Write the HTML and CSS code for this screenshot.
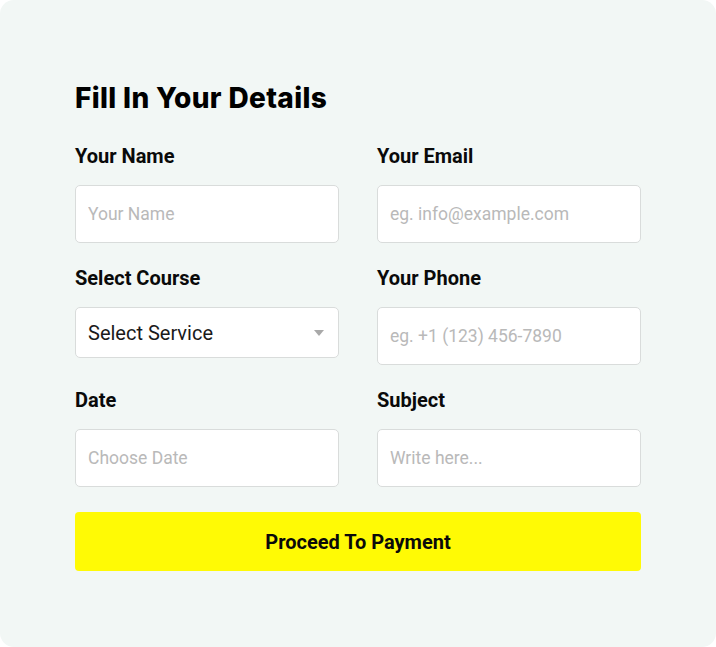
FILE: index.html
```html
<!DOCTYPE html>
<html>
<head>
<meta charset="utf-8">
<link rel="stylesheet" href="styles.css">
</head>
<body>
<div class="card">
  <h2 class="title">Fill In Your Details</h2>
  <form class="form">
    <div class="field">
      <label class="label">Your Name</label>
      <input class="input" type="text" placeholder="Your Name">
    </div>
    <div class="field">
      <label class="label">Your Email</label>
      <input class="input" type="text" placeholder="eg. info@example.com">
    </div>
    <div class="field">
      <label class="label">Select Course</label>
      <div class="select">
        <span>Select Service</span>
        <svg class="caret" width="10" height="6" viewBox="0 0 10 6"><path d="M0 0H10L5 6Z" fill="#a9a9a9"/></svg>
      </div>
    </div>
    <div class="field">
      <label class="label">Your Phone</label>
      <input class="input" type="text" placeholder="eg. +1 (123) 456-7890">
    </div>
    <div class="field">
      <label class="label">Date</label>
      <input class="input" type="text" placeholder="Choose Date">
    </div>
    <div class="field">
      <label class="label">Subject</label>
      <input class="input" type="text" placeholder="Write here...">
    </div>
    <button class="btn" type="button">Proceed To Payment</button>
  </form>
</div>
</body>
</html>
```

FILE: styles.css
```css
* { box-sizing: border-box; }
html, body { margin: 0; padding: 0; background: #ffffff; }
.card {
  width: 716px;
  height: 647px;
  background: #f2f7f5;
  border-radius: 14px;
  padding: 78px 75px 0 75px;
  font-family: Roboto, "Liberation Sans", sans-serif;
}
.title {
  margin: 0 0 26px 0;
  font-family: "Inter", "Open Sans", sans-serif;
  font-weight: 800;
  font-size: 28px;
  line-height: 40px;
  letter-spacing: 0.35px;
  color: #000;
}
.form {
  display: grid;
  grid-template-columns: 264px 264px;
  column-gap: 38px;
  row-gap: 23px;
}
.field { display: flex; flex-direction: column; }
.label {
  font-size: 20px;
  font-weight: 700;
  line-height: 24px;
  color: #0a0a0a;
  margin-bottom: 17px;
}
.input, .select {
  height: 58px;
  width: 100%;
  border: 1px solid #d9dcdb;
  border-radius: 5px;
  background: #fff;
  padding: 0 12px;
  font-family: Roboto, "Liberation Sans", sans-serif;
  font-size: 17.5px;
  color: #222;
  outline: none;
}
.input::placeholder { color: #b9b9b9; }
.select {
  height: 51px;
  display: flex;
  align-items: center;
  justify-content: space-between;
  font-size: 20px;
  color: #1a1a1a;
  padding: 0 14px 0 12px;
}
.caret { margin-top: 1px; }
.btn {
  grid-column: 1 / 3;
  height: 59px;
  margin-top: 2px;
  border: none;
  border-radius: 4px;
  background: #fffa05;
  font-family: Roboto, "Liberation Sans", sans-serif;
  font-size: 20px;
  font-weight: 700;
  color: #0a0a0a;
}
```
